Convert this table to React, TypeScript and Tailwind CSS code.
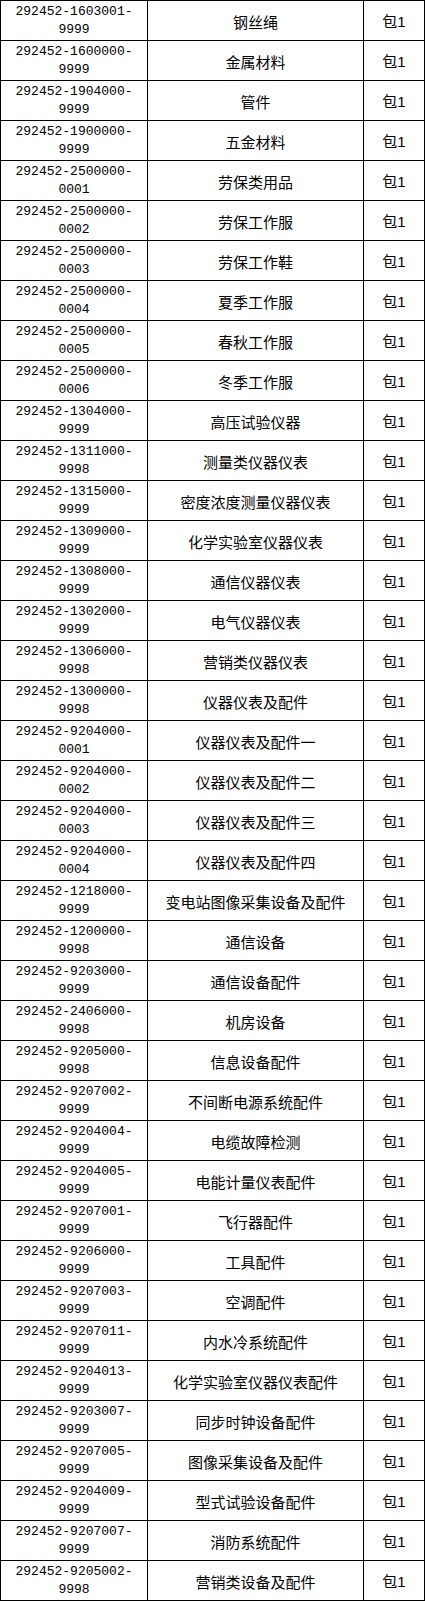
import React from 'react'

// 物料编码 / 名称 / 包号
const rows: [string, string, string][] = [
  ['292452-1603001-', '9999', '钢丝绳'],
  ['292452-1600000-', '9999', '金属材料'],
  ['292452-1904000-', '9999', '管件'],
  ['292452-1900000-', '9999', '五金材料'],
  ['292452-2500000-', '0001', '劳保类用品'],
  ['292452-2500000-', '0002', '劳保工作服'],
  ['292452-2500000-', '0003', '劳保工作鞋'],
  ['292452-2500000-', '0004', '夏季工作服'],
  ['292452-2500000-', '0005', '春秋工作服'],
  ['292452-2500000-', '0006', '冬季工作服'],
  ['292452-1304000-', '9999', '高压试验仪器'],
  ['292452-1311000-', '9998', '测量类仪器仪表'],
  ['292452-1315000-', '9999', '密度浓度测量仪器仪表'],
  ['292452-1309000-', '9999', '化学实验室仪器仪表'],
  ['292452-1308000-', '9999', '通信仪器仪表'],
  ['292452-1302000-', '9999', '电气仪器仪表'],
  ['292452-1306000-', '9998', '营销类仪器仪表'],
  ['292452-1300000-', '9998', '仪器仪表及配件'],
  ['292452-9204000-', '0001', '仪器仪表及配件一'],
  ['292452-9204000-', '0002', '仪器仪表及配件二'],
  ['292452-9204000-', '0003', '仪器仪表及配件三'],
  ['292452-9204000-', '0004', '仪器仪表及配件四'],
  ['292452-1218000-', '9999', '变电站图像采集设备及配件'],
  ['292452-1200000-', '9998', '通信设备'],
  ['292452-9203000-', '9999', '通信设备配件'],
  ['292452-2406000-', '9998', '机房设备'],
  ['292452-9205000-', '9998', '信息设备配件'],
  ['292452-9207002-', '9999', '不间断电源系统配件'],
  ['292452-9204004-', '9999', '电缆故障检测'],
  ['292452-9204005-', '9999', '电能计量仪表配件'],
  ['292452-9207001-', '9999', '飞行器配件'],
  ['292452-9206000-', '9999', '工具配件'],
  ['292452-9207003-', '9999', '空调配件'],
  ['292452-9207011-', '9999', '内水冷系统配件'],
  ['292452-9204013-', '9999', '化学实验室仪器仪表配件'],
  ['292452-9203007-', '9999', '同步时钟设备配件'],
  ['292452-9207005-', '9999', '图像采集设备及配件'],
  ['292452-9204009-', '9999', '型式试验设备配件'],
  ['292452-9207007-', '9999', '消防系统配件'],
  ['292452-9205002-', '9998', '营销类设备及配件'],
]

export default function App() {
  return (
    <div className="bg-white min-h-screen text-black">
      <div className="w-[425px] border-l border-t border-black">
        {rows.map(([a, b, name], i) => (
          <div key={i} className="flex h-[40px]">
            <div className="w-[147px] shrink-0 border-r border-b border-black flex flex-col items-center justify-center pt-[1px] font-['Liberation_Mono',monospace] text-[13px] leading-[18px]">
              <span>{a}</span>
              <span>{b}</span>
            </div>
            <div className="w-[216px] shrink-0 border-r border-b border-black flex items-center justify-center pt-[2px] font-['Noto_Sans_CJK_SC',sans-serif] text-[15px] leading-[20px]">
              {name}
            </div>
            <div className="w-[61px] shrink-0 border-r border-b border-black flex items-center justify-center pt-[2px] font-['Liberation_Sans','Noto_Sans_CJK_SC',sans-serif] text-[15px] leading-[20px]">
              包1
            </div>
          </div>
        ))}
      </div>
    </div>
  )
}
